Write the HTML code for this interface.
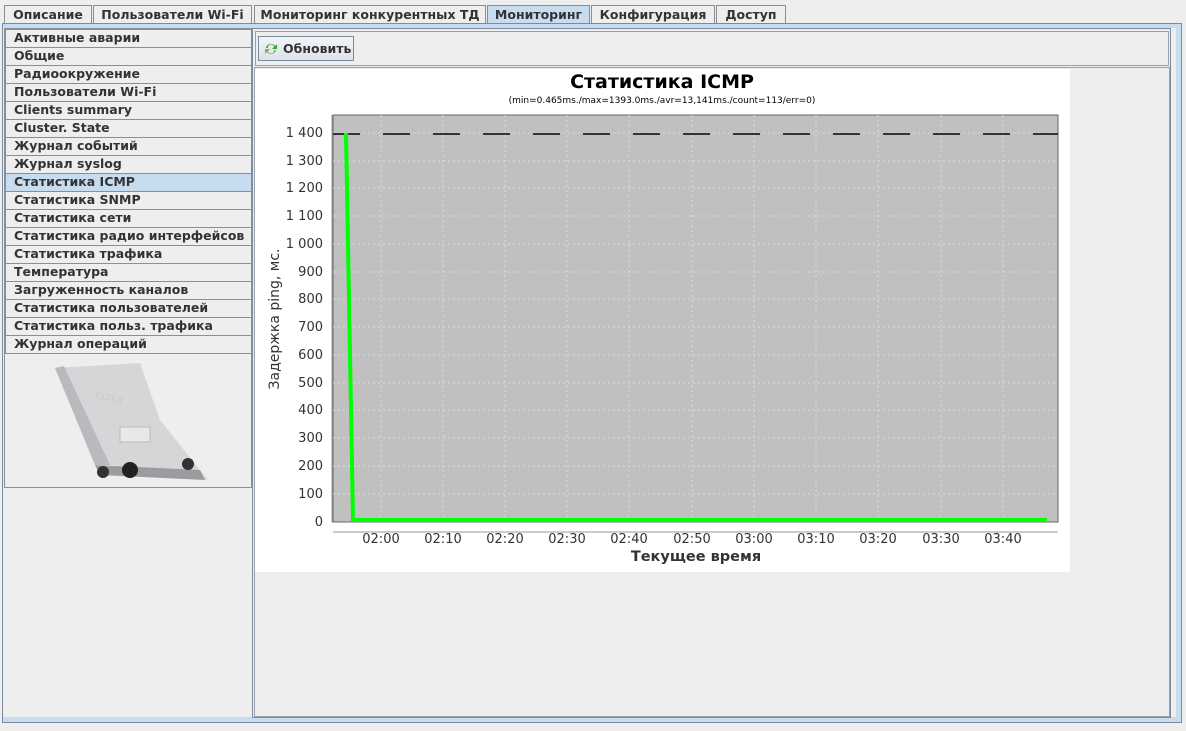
<!DOCTYPE html><html><head><meta charset="utf-8"><style>
body{margin:0;width:1186px;height:731px;background:#eeeeee;font-family:"DejaVu Sans","Liberation Sans",sans-serif;position:relative;overflow:hidden}
.t{position:absolute;top:5px;height:18px;border:1px solid #8a8f96;border-bottom:none;background:#eeeeee;font-size:12.5px;font-weight:bold;color:#333;line-height:18px;text-align:center;box-sizing:border-box}
.t.a{background:#c8dcf0;border-color:#6f8fbf;top:5px;height:19px}
.frame{position:absolute;left:2px;top:23px;width:1180px;height:700px;border:1px solid #7a8aa0;box-sizing:border-box}
.stripe{position:absolute;left:3px;top:24px;width:1178px;height:4px;background:#c8dcf0}
.left{position:absolute;left:4px;top:28px;width:248px;height:460px;border:1px solid #8a8f96;box-sizing:border-box;background:#eeeeee}
.it{position:absolute;left:5px;width:246px;height:18px;border-top:1px solid #8a8f96;border-left:1px solid #8a8f96;box-sizing:border-box;font-size:12.5px;font-weight:bold;color:#333;line-height:16px;padding-left:8px}
.it.s{background:#c8dcf0}
.right{position:absolute;left:252px;top:28px;width:919px;height:690px;border:1px solid #7a8aa0;box-sizing:border-box}
.tool{position:absolute;left:255px;top:31px;width:914px;height:35px;border:1px solid #9aa0a8;box-sizing:border-box}
.btn{position:absolute;left:258px;top:36px;width:96px;height:25px;border:1px solid #7a8aa0;box-sizing:border-box;background:linear-gradient(#f2f4f7,#dde3ea);font-size:12.5px;font-weight:bold;color:#333;line-height:23px;padding-left:24px}
.inner{position:absolute;left:254px;top:67px;width:916px;height:650px;border:1px solid #9aa0a8;box-sizing:border-box}
</style></head><body>
<div class="t" style="left:4px;width:88px">Описание</div>
<div class="t" style="left:93px;width:159px">Пользователи Wi-Fi</div>
<div class="t" style="left:254px;width:232px">Мониторинг конкурентных ТД</div>
<div class="t a" style="left:487px;width:103px">Мониторинг</div>
<div class="t" style="left:591px;width:124px">Конфигурация</div>
<div class="t" style="left:716px;width:70px">Доступ</div>
<div class="frame"></div><div class="stripe"></div>
<div style="position:absolute;left:1176px;top:24px;width:5px;height:698px;background:#c8dcf0"></div>
<div style="position:absolute;left:3px;top:717px;width:1178px;height:5px;background:#c8dcf0"></div>
<div class="left"></div>
<div class="it" style="top:29px">Активные аварии</div>
<div class="it" style="top:47px">Общие</div>
<div class="it" style="top:65px">Радиоокружение</div>
<div class="it" style="top:83px">Пользователи Wi-Fi</div>
<div class="it" style="top:101px">Clients summary</div>
<div class="it" style="top:119px">Cluster. State</div>
<div class="it" style="top:137px">Журнал событий</div>
<div class="it" style="top:155px">Журнал syslog</div>
<div class="it s" style="top:173px">Статистика ICMP</div>
<div class="it" style="top:191px">Статистика SNMP</div>
<div class="it" style="top:209px">Статистика сети</div>
<div class="it" style="top:227px">Статистика радио интерфейсов</div>
<div class="it" style="top:245px">Статистика трафика</div>
<div class="it" style="top:263px">Температура</div>
<div class="it" style="top:281px">Загруженность каналов</div>
<div class="it" style="top:299px">Статистика пользователей</div>
<div class="it" style="top:317px">Статистика польз. трафика</div>
<div class="it" style="top:335px">Журнал операций</div>
<div style="position:absolute;left:5px;top:353px;width:246px;height:1px;background:#8a8f96"></div>
<svg style="position:absolute;left:50px;top:360px" width="160" height="125">
<polygon points="5,8 90,3 110,60 158,120 95,108 60,105 45,105" fill="#d4d6d8"/>
<polygon points="5,8 45,105 60,105 14,6" fill="#b8babd"/>
<polygon points="45,105 150,110 155,120 50,115" fill="#9a9c9f"/>
<rect x="70" y="67" width="30" height="15" fill="#e6e8ea" stroke="#bbb"/>
<text x="45" y="38" font-size="9" fill="#c4c6c8" font-family="Liberation Sans" transform="rotate(12 45 38)">ELTEX</text>
<circle cx="53" cy="112" r="6" fill="#333"/><circle cx="80" cy="110" r="8" fill="#222"/><circle cx="138" cy="104" r="6" fill="#333"/>
</svg>
<div class="right"></div>
<div class="tool"></div>
<div class="btn">Обновить</div>
<svg style="position:absolute;left:263px;top:41px" width="16" height="16"><path d="M3 7a5 5 0 0 1 9-2l2-2v5h-5l2-2a3 3 0 0 0-6 1z" fill="#3aa83a"/><path d="M13 9a5 5 0 0 1-9 2l-2 2V8h5l-2 2a3 3 0 0 0 6-1z" fill="#6cc04a"/></svg>
<div class="inner"></div>
<svg style="position:absolute;left:255px;top:69px" width="815" height="503" font-family="DejaVu Sans, Liberation Sans, sans-serif">
<rect width="815" height="503" fill="#fff"/>
<text x="407" y="19" font-size="19" font-weight="bold" text-anchor="middle" fill="#000">Статистика ICMP</text>
<text x="407" y="34" font-size="9" text-anchor="middle" fill="#000">(min=0.465ms./max=1393.0ms./avr=13,141ms./count=113/err=0)</text>
<rect x="78" y="46" width="725" height="407" fill="#c0c0c0" stroke="#666"/>
<g stroke="#e4e4e4" stroke-dasharray="2,3" stroke-width="1" opacity="0.8">
<path d="M78 64H803M78 92H803M78 119H803M78 147H803M78 175H803M78 203H803M78 230H803M78 258H803M78 286H803M78 314H803M78 341H803M78 369H803M78 397H803M78 425H803"/>
<path d="M126 46V453M188 46V453M250 46V453M312 46V453M374 46V453M437 46V453M499 46V453M561 46V453M623 46V453M686 46V453M748 46V453"/>
</g>
<path d="M78 65H803" stroke="#333" stroke-width="2" stroke-dasharray="27,23"/>
<polyline points="91,64 98,451 792,451" fill="none" stroke="#00ff00" stroke-width="4"/>
<path d="M77 46V453M78 463H803" stroke="#999"/>
<g font-size="13" fill="#333" text-anchor="end">
<text x="68" y="68">1 400</text><text x="68" y="96">1 300</text><text x="68" y="123">1 200</text><text x="68" y="151">1 100</text><text x="68" y="179">1 000</text><text x="68" y="207">900</text><text x="68" y="234">800</text><text x="68" y="262">700</text><text x="68" y="290">600</text><text x="68" y="318">500</text><text x="68" y="345">400</text><text x="68" y="373">300</text><text x="68" y="401">200</text><text x="68" y="429">100</text><text x="68" y="457">0</text>
</g>
<g font-size="13" fill="#333" text-anchor="middle">
<text x="126" y="474">02:00</text><text x="188" y="474">02:10</text><text x="250" y="474">02:20</text><text x="312" y="474">02:30</text><text x="374" y="474">02:40</text><text x="437" y="474">02:50</text><text x="499" y="474">03:00</text><text x="561" y="474">03:10</text><text x="623" y="474">03:20</text><text x="686" y="474">03:30</text><text x="748" y="474">03:40</text>
</g>
<text x="441" y="492" font-size="14.5" fill="#333" text-anchor="middle" style="font-weight:600">Текущее время</text>
<text transform="translate(24 250) rotate(-90)" font-size="14" fill="#333" text-anchor="middle">Задержка ping, мс.</text>
</svg>
</body></html>
